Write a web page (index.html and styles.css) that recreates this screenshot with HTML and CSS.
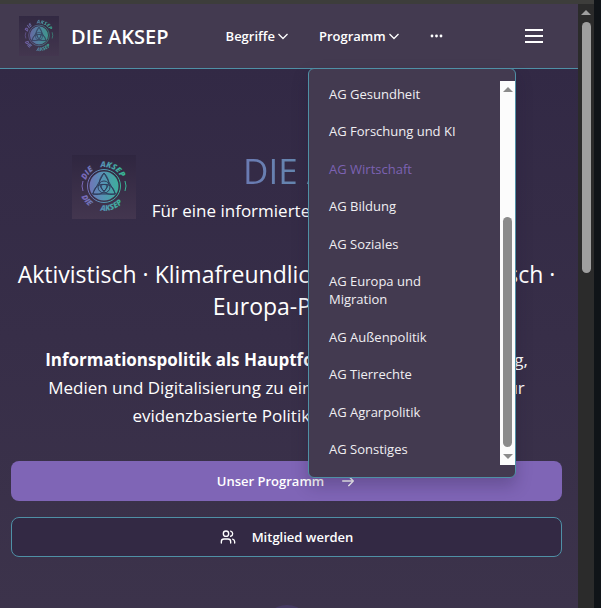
FILE: index.html
```html
<!DOCTYPE html>
<html lang="de">
<head>
<meta charset="utf-8">
<meta name="viewport" content="width=device-width, initial-scale=1">
<title>DIE AKSEP</title>
<link rel="stylesheet" href="styles.css">
</head>
<body>
<svg class="defs" aria-hidden="true">
  <defs>
    <linearGradient id="brand" gradientUnits="userSpaceOnUse" x1="12" y1="0" x2="50" y2="0">
      <stop offset="0" stop-color="#7a68b8"/>
      <stop offset=".5" stop-color="#5593b4"/>
      <stop offset="1" stop-color="#38b595"/>
    </linearGradient>
    <linearGradient id="tile" x1="0" y1="0" x2="0" y2="1">
      <stop offset="0" stop-color="#2f2640"/>
      <stop offset="1" stop-color="#43364f"/>
    </linearGradient>
    <symbol id="logo" viewBox="0 0 64 64">
      <rect width="64" height="64" fill="url(#tile)"/>
      <path id="arc-top" d="M13 31A19 19 0 0 1 51 31" fill="none"/>
      <path id="arc-bottom" d="M7 31A25 25 0 0 0 57 31" fill="none"/>
      <circle cx="32" cy="31" r="16.500" fill="none" stroke="url(#brand)" stroke-width="1"/>
      <circle cx="32" cy="31" r="14.500" fill="url(#brand)"/>
      <g fill="none" stroke="#2f3d5c" stroke-width="1">
        <path d="M32 18C26 24 26 31 32 36C38 31 38 24 32 18Z"/>
        <path d="M21 39C22 31 28 28 35 30C35 36 29 41 21 39Z"/>
        <path d="M43 39C42 31 36 28 29 30C29 36 35 41 43 39Z"/>
        <path d="M32 18L20.500 39H43.500Z"/>
        <circle cx="32" cy="32" r="6"/>
      </g>
      <path d="M11 26Q9 31 11 36M53 26Q55 31 53 36" fill="none" stroke="url(#brand)"/>
      <g class="logo-text" fill="url(#brand)">
        <text><textPath href="#arc-top" startOffset="10%">DIE</textPath></text>
        <text><textPath href="#arc-top" startOffset="44%">AKSEP</textPath></text>
        <text><textPath href="#arc-bottom" startOffset="14%">DIE</textPath></text>
        <text><textPath href="#arc-bottom" startOffset="45%">AKSEP</textPath></text>
      </g>
    </symbol>
  </defs>
</svg>
<div class="frame">
  <div class="page">
    <header class="header">
      <a class="brand" href="#"><svg class="brand-logo" aria-hidden="true"><use href="#logo"/></svg><span>DIE AKSEP</span></a>
      <nav class="nav">
        <button class="nav-item" type="button">Begriffe<svg class="chevron" viewBox="0 0 12 12" aria-hidden="true"><path d="M1.500 4L6 8.500 10.500 4"/></svg></button>
        <button class="nav-item" type="button" aria-expanded="true">Programm<svg class="chevron" viewBox="0 0 12 12" aria-hidden="true"><path d="M1.500 4L6 8.500 10.500 4"/></svg></button>
        <button class="nav-item" type="button" aria-label="Mehr"><svg class="dots" viewBox="0 0 14 4"><circle cx="2" cy="2" r="1.400"/><circle cx="6.500" cy="2" r="1.400"/><circle cx="11" cy="2" r="1.400"/></svg></button>
      </nav>
      <button class="burger" type="button" aria-label="Menü"><span></span><span></span><span></span></button>
      <div class="menu">
        <ul class="menu-list">
          <li><a href="#">AG Gesundheit</a></li>
          <li><a href="#">AG Forschung und KI</a></li>
          <li><a class="active" href="#">AG Wirtschaft</a></li>
          <li><a href="#">AG Bildung</a></li>
          <li><a href="#">AG Soziales</a></li>
          <li><a href="#">AG Europa und Migration</a></li>
          <li><a href="#">AG Außenpolitik</a></li>
          <li><a href="#">AG Tierrechte</a></li>
          <li><a href="#">AG Agrarpolitik</a></li>
          <li><a href="#">AG Sonstiges</a></li>
        </ul>
        <div class="menu-scroll"><i class="up"></i><i class="thumb"></i><i class="down"></i></div>
      </div>
    </header>
    <main class="hero">
      <div class="intro">
        <svg class="intro-logo" aria-hidden="true"><use href="#logo"/></svg>
        <div>
          <h1>DIE AKSEP</h1>
          <p class="claim">Für eine informierte &amp; gerechte Gesellschaft</p>
        </div>
      </div>
      <h2>Aktivistisch · Klimafreundlich · Basisdemokratisch · Europa-Partei</h2>
      <p class="text"><strong>Informationspolitik als Hauptforderung:</strong> Um gute Bildung, Medien und Digitalisierung zu einem starken Fundament für evidenzbasierte Politik zu ermöglichen.</p>
      <a class="button primary" href="#">Unser Programm<svg class="icon" viewBox="0 0 24 24" aria-hidden="true"><path d="M4 12h16M13 5l7 7-7 7"/></svg></a>
      <a class="button outline" href="#"><svg class="icon" viewBox="0 0 24 24" aria-hidden="true"><path d="M16 21v-2a4 4 0 0 0-4-4H6a4 4 0 0 0-4 4v2M22 21v-2a4 4 0 0 0-3-3.870M16 3.130a4 4 0 0 1 0 7.750"/><circle cx="9" cy="7" r="4"/></svg>Mitglied werden</a>
      <span class="orb"></span>
    </main>
  </div>
  <div class="scrollbar"><i class="up"></i><i class="thumb"></i></div>
</div>
</body>
</html>
```
FILE: styles.css
```css
* { box-sizing: border-box; }
body {
  margin: 0;
  background: #101418;
  color: #fff;
  font-family: "Segoe UI", "Open Sans", "Noto Sans", sans-serif;
}
h1, h2, p, ul { margin: 0; padding: 0; }
a { color: inherit; text-decoration: none; }
button { border: 0; padding: 0; background: none; color: inherit; font: inherit; }
.defs { position: absolute; width: 0; height: 0; }
.logo-text { font: italic 800 8px "Open Sans", sans-serif; }

.frame {
  display: flex;
  height: 100vh;
  overflow: hidden;
  margin-right: 7px;
  border-top: 4px solid #3d3d3b;
}
.page {
  flex: 1;
  min-width: 0;
  overflow: hidden;
  background: linear-gradient(#322945 10%, #3c334b);
}

.header {
  position: relative;
  display: flex;
  align-items: center;
  height: 65px;
  padding: 0 35px 0 19px;
  background: #433a50;
  border-bottom: 1px solid #4f90a6;
}
.brand { display: flex; align-items: center; gap: 12px; font-size: 20px; font-weight: 600; white-space: nowrap; }
.brand-logo { width: 40px; height: 40px; opacity: .8; }
.nav { display: flex; align-items: center; gap: 30px; margin-left: 57px; }
.nav-item { display: flex; align-items: center; gap: 2px; font-size: 13px; font-weight: 600; }
.chevron { width: 12px; height: 12px; fill: none; stroke: #fff; stroke-width: 1.300; }
.dots { width: 14px; height: 4px; fill: #fff; }
.burger { display: grid; gap: 4px; width: 18px; margin-left: auto; }
.burger span { height: 2px; background: #fff; }

.menu {
  position: absolute;
  z-index: 2;
  top: 64px;
  left: 308px;
  display: flex;
  width: 208px;
  padding: 12px 0;
  background: #433a50;
  border: 1px solid #4f90a6;
  border-radius: 6px;
  box-shadow: 0 8px 16px rgba(30, 20, 50, .25);
}
.menu-list {
  flex: 1;
  display: flex;
  flex-direction: column;
  justify-content: space-between;
  height: 384px;
  padding: 4px 44px 7px 20px;
  list-style: none;
  font-size: 13px;
  line-height: 18px;
  font-weight: 500;
  color: #f0eef2;
}
.menu-list .active { color: #7c62b3; }
.menu-scroll { display: flex; flex-direction: column; align-items: center; width: 15px; padding: 6px 0; background: #fcfcfc; }
.menu-scroll .thumb { width: 9px; height: 230px; margin: auto 0 7px; border-radius: 5px; background: #8b8b8b; }
.up, .down { border: 5px solid transparent; }
.up { border-top: 0; border-bottom-color: #8b8b8b; }
.down { border-bottom: 0; border-top-color: #8b8b8b; }

.hero { padding: 80px 16px 0 11px; text-align: center; }
.intro { display: flex; align-items: center; justify-content: center; gap: 16px; }
.intro-logo { width: 64px; height: 64px; }
h1 {
  margin-bottom: 4px;
  font-size: 35px;
  line-height: 44px;
  font-weight: 400;
  color: transparent;
  background: linear-gradient(90deg, #7465b8, #4fb5a3);
  background-clip: text;
}
.claim { font-size: 17px; line-height: 28px; }
h2 { margin-top: 33px; font-size: 23px; line-height: 32px; font-weight: 400; }
.text { margin-top: 24px; padding: 0 8px; font-size: 17px; line-height: 28px; }
.button {
  display: flex;
  align-items: center;
  justify-content: center;
  gap: 16px;
  height: 40px;
  margin-top: 16px;
  border-radius: 8px;
  font-size: 13px;
  font-weight: 600;
}
.text + .button { margin-top: 31px; }
.primary { background: #7f65b6; }
.outline { background: #332944; border: 1px solid #4f90a6; }
.icon { width: 16px; height: 16px; fill: none; stroke: #fff; stroke-width: 2; stroke-linecap: round; stroke-linejoin: round; }
.orb { display: block; width: 48px; height: 48px; margin: 48px auto 0; border-radius: 50%; background: #453a62; }

.scrollbar { display: flex; flex-direction: column; align-items: center; gap: 7px; width: 16px; padding-top: 6px; background: #2b2b2b; }
.scrollbar .up { border-bottom-color: #9f9f9f; }
.scrollbar .thumb { width: 9px; height: 251px; border-radius: 5px; background: #9f9f9f; }
```
